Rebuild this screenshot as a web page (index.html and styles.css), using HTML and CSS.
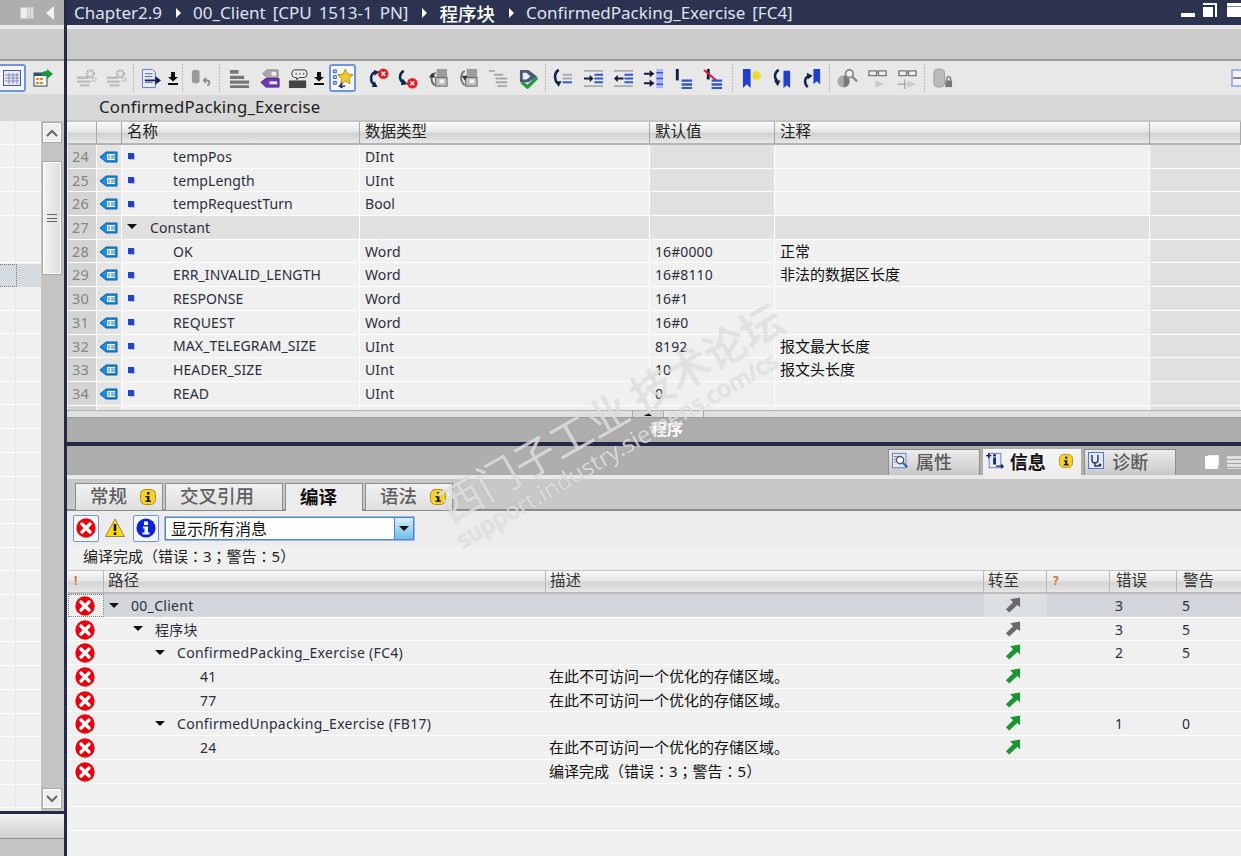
FILE: index.html
```html
<!DOCTYPE html>
<html lang="zh-CN">
<head>
    <meta charset="UTF-8">
    <title>ConfirmedPacking_Exercise [FC4]</title>
    <link rel="stylesheet" href="styles.css">
</head>
<body>
<svg class="sprite" xmlns="http://www.w3.org/2000/svg">
    <symbol id="i-tag" viewBox="0 0 18 12"><path d="M0 6 6 1H17V11H6Z" fill="#1a8ede" stroke="#0b5aa5"/><rect x="7" y="3" width="8" height="6" fill="#fff"/><path d="M9 4v4M12 4v4M14 4v4" stroke="#1a6cc0"/></symbol>
    <symbol id="i-err" viewBox="0 0 20 20"><circle cx="10" cy="10" r="9.7" fill="#e8000f"/><path d="M6 6l8 8M14 6l-8 8" stroke="#fff" stroke-width="3.4" stroke-linecap="round"/></symbol>
    <symbol id="i-warn" viewBox="0 0 20 20"><path d="M10 1 19.500 18.500H.5Z" fill="#ffdc00" stroke="#8a8a60"/><path d="M10 6v7" stroke="#111" stroke-width="2.600"/><rect x="8.700" y="14.400" width="2.600" height="2.600" fill="#111"/></symbol>
    <symbol id="i-info" viewBox="0 0 20 20"><circle cx="10" cy="10" r="9.600" fill="#0a24d6"/><rect x="8" y="3.500" width="4" height="3.500" fill="#fff"/><path d="M7 8.500h5v6h1.500v2h-7v-2H8.500v-4H7Z" fill="#fff"/></symbol>
    <symbol id="i-badge" viewBox="0 0 16 16"><rect x=".5" y=".5" width="15" height="15" rx="5" fill="#f8d22c" stroke="#b08c10"/><rect x="7" y="3" width="2.500" height="2.500" fill="#222"/><path d="M5.500 7H9.500v4.500H11V13H5.500v-1.500H7V8.500H5.500Z" fill="#222"/></symbol>
    <symbol id="i-go" viewBox="0 0 16 17"><path d="M.5 13 8 5.500 5 2.500 15.500.5V11L12.500 8.500 4 16.500Z" fill="currentColor"/></symbol>
    <symbol id="i-gears" viewBox="0 0 22 22"><path d="M1 9h12v2.500H1ZM1 13h14v2.500H1ZM4 17h10v2.500H4Z" fill="#bcbcbc"/><circle cx="15" cy="6" r="3.500" fill="none" stroke="#aaa" stroke-width="2.400" stroke-dasharray="1.500 1"/><circle cx="19" cy="12" r="2" fill="none" stroke="#b0b0b0" stroke-width="1.600" stroke-dasharray="1 1"/></symbol>
    <symbol id="i-doc" viewBox="0 0 22 22"><path d="M1.500 1.500H12l3 3V20.500H1.500Z" fill="#e6ecfa" stroke="#5a78c8"/><path d="M4 6h8M4 9h8M4 15h8" stroke="#5060a0"/><path d="M4 12h11V8.500l6 4.500-6 4.500V14H4Z" fill="#141f55"/></symbol>
    <symbol id="i-down" viewBox="0 0 12 14"><path d="M4 1H8V6H11L6 10.500 1 6H4ZM1 12h10v2H1Z" fill="#111"/></symbol>
    <symbol id="i-dbundo" viewBox="0 0 22 22"><path d="M2 4c0-3 8-3 8 0V14c0 3-8 3-8 0Z" fill="#9a9a9a"/><path d="M14 13h4c3 0 3 5 0 5M14 13l3-2.500M14 13l3 2.500" fill="none" stroke="#8a8a8a" stroke-width="1.800"/></symbol>
    <symbol id="i-lines" viewBox="0 0 22 22"><path d="M1 2h9v4H1ZM1 8h15v3.500H1ZM1 13h20v3.500H1ZM1 18h20v3H1Z" fill="#777"/></symbol>
    <symbol id="i-tags" viewBox="0 0 22 22"><path d="M4 6 8 2H20V10H8Z" fill="#a8a8a8" stroke="#888"/><rect x="13" y="4" width="5" height="4" fill="#eee"/><path d="M2 15 7 11H21V20H7Z" fill="#7038b8" stroke="#50208a"/><rect x="11" y="14" width="8" height="3" fill="#eee"/></symbol>
    <symbol id="i-chat" viewBox="0 0 22 22"><rect x="1" y="13" width="18" height="8" fill="#444"/><path d="M9 12v-2H7a3 4 0 0 1 0-8H17a3 4 0 0 1 0 8h-5Z" fill="#eee" stroke="#333"/><path d="M8 6h1M12 6h1M16 6h1" stroke="#333" stroke-width="2"/></symbol>
    <symbol id="i-star" viewBox="0 0 22 22"><path d="M1.500 2h3v3h-3ZM1.500 8h3v3h-3ZM1.500 14h3v3h-3Z" fill="#c8d8f8" stroke="#3058b8"/><path d="M14 1l2.500 5.500 5.500.5-4 4 1 5.500-5-3-5 3 1-5.500-4-4 5.500-.5Z" fill="#f4c830" stroke="#b89010"/><path d="M14 19H8l3-3M8 19l3 2" fill="none" stroke="#141f55" stroke-width="1.400"/></symbol>
    <symbol id="i-curlerr" viewBox="0 0 22 22"><path d="M8 4C2 6 2 14 6 17" fill="none" stroke="#11264f" stroke-width="2.600"/><path d="M4 20h6l-3-6ZM6 2l6 2-5 4Z" fill="#11264f"/><circle cx="16" cy="6" r="5.500" fill="#ea1c28"/><path d="M14 4l4 4M18 4l-4 4" stroke="#fff" stroke-width="1.500"/></symbol>
    <symbol id="i-curlerr2" viewBox="0 0 22 22"><path d="M6 3C1 6 1 12 5 15" fill="none" stroke="#11264f" stroke-width="2.600"/><path d="M3 18 10 17 5 11Z" fill="#11264f"/><circle cx="15" cy="16" r="5.500" fill="#ea1c28"/><path d="M13 14l4 4M17 14l-4 4" stroke="#fff" stroke-width="1.500"/></symbol>
    <symbol id="i-sync1" viewBox="0 0 22 22"><rect x="9" y="1" width="11" height="9" fill="#9c9c9c"/><rect x="8" y="10" width="12" height="9" fill="#bdbdbd" stroke="#666"/><rect x="12" y="12" width="5" height="4" fill="#eee"/><path d="M8 5C3 7 2 14 7 18" fill="none" stroke="#666" stroke-width="2"/><path d="M1 10h7l-3.500-5Z" fill="#333"/></symbol>
    <symbol id="i-sync2" viewBox="0 0 22 22"><rect x="9" y="1" width="11" height="9" fill="#9c9c9c"/><rect x="8" y="10" width="12" height="9" fill="#bdbdbd" stroke="#666"/><rect x="12" y="12" width="5" height="4" fill="#eee"/><path d="M7 3C2 6 2 14 7 18" fill="none" stroke="#777" stroke-width="2"/><path d="M4 8h6l-3 5Z" fill="#333"/></symbol>
    <symbol id="i-graylines" viewBox="0 0 22 22"><path d="M1 2h6v2H1ZM6 6h10v2H6ZM8 10h12v2H8ZM8 14h12v2H8ZM10 18h10v2H10Z" fill="#a8a8a8"/></symbol>
    <symbol id="i-plug" viewBox="0 0 22 22"><path d="M2 2h9l9 7-9 6H2Z" fill="#495a78"/><path d="M5 5h4l4 4-4 3H5Z" fill="#e8edf5"/><path d="M4 15 10 20 20 10" fill="none" stroke="#1d9a36" stroke-width="3.400"/></symbol>
    <symbol id="i-jmp-l" viewBox="0 0 22 22"><path d="M6 2C1 5 1 12 5 16" fill="none" stroke="#11264f" stroke-width="2.600"/><path d="M2 14h7l-3 6Z" fill="#11264f"/><path d="M10 6h10v2H10ZM10 10h10v2H10Z" fill="#aaa"/><path d="M10 14h10v2H10Z" fill="#2f55d8"/></symbol>
    <symbol id="i-indent" viewBox="0 0 22 22"><path d="M1 2h20v2H1ZM1 18h20v2H1Z" fill="#aaa"/><path d="M12 6h9v2h-9ZM12 10h9v2h-9ZM12 14h9v2h-9Z" fill="#2f55d8"/><path d="M1 10h6V7l4 4-4 4v-3H1Z" fill="#111c40"/></symbol>
    <symbol id="i-outdent" viewBox="0 0 22 22"><path d="M1 2h20v2H1ZM1 18h20v2H1Z" fill="#aaa"/><path d="M12 6h9v2h-9ZM12 10h9v2h-9ZM12 14h9v2h-9Z" fill="#2f55d8"/><path d="M11 10H5V7l-4 4 4 4v-3h6Z" fill="#111c40"/></symbol>
    <symbol id="i-cols" viewBox="0 0 22 22"><path d="M14 1h7v20h-7Z" fill="#a8b8ee"/><path d="M1 5h6V2l5 4-5 4V7H1ZM1 15h6v-3l5 4-5 4v-3H1Z" fill="#111c40"/><path d="M14 5h7M14 11h7M14 17h7" stroke="#2f55d8" stroke-width="1.500"/></symbol>
    <symbol id="i-mark" viewBox="0 0 22 22"><rect x="3" y="1" width="3" height="12" fill="#111c40"/><path d="M9 12h11v2.500H9ZM9 16h11v2.500H9ZM9 20h11v2H9Z" fill="#2f55d8"/></symbol>
    <symbol id="i-unmark" viewBox="0 0 22 22"><rect x="4" y="1" width="3" height="11" fill="#111c40"/><path d="M1 2 14 13" stroke="#e01a20" stroke-width="2"/><path d="M9 12h11v2.500H9ZM9 16h11v2.500H9ZM9 20h11v2H9Z" fill="#2f55d8"/></symbol>
    <symbol id="i-bookstar" viewBox="0 0 22 22"><path d="M1 1h8v20l-4-4-4 4Z" fill="#1f3fd0"/><path d="M15 3v10M10 8h10M11.500 4.500l7 7M18.500 4.500l-7 7" stroke="#e8d820" stroke-width="2"/></symbol>
    <symbol id="i-bookl" viewBox="0 0 22 22"><path d="M12 3h7v18l-3.500-3-3.500 3Z" fill="#1f3fd0"/><path d="M7 2C2 5 2 11 6 14" fill="none" stroke="#11264f" stroke-width="2.600"/><path d="M2 13h7l-3 6Z" fill="#11264f"/></symbol>
    <symbol id="i-bookr" viewBox="0 0 22 22"><path d="M12 1h7v16l-3.500-3-3.500 3Z" fill="#1f3fd0"/><path d="M8 8C2 10 2 16 6 20" fill="none" stroke="#11264f" stroke-width="2.600"/><path d="M5 5l6 3-5 4Z" fill="#11264f"/></symbol>
    <symbol id="i-search" viewBox="0 0 22 22"><circle cx="7" cy="14" r="6.500" fill="#aaa"/><path d="M7 8v12a6 6 0 0 0 0-12Z" fill="#7a7a7a"/><circle cx="13" cy="6" r="4" fill="#eee" stroke="#888" stroke-width="1.800"/><path d="M16 9l5 5" stroke="#888" stroke-width="2.400"/></symbol>
    <symbol id="i-glass1" viewBox="0 0 22 22"><path d="M2 3h8v5H2ZM12 3h8v5h-8ZM10 4h2" fill="#eee" stroke="#777" stroke-width="1.400"/><path d="M9 13l9 4-9 4Z" fill="#ccc"/></symbol>
    <symbol id="i-glass2" viewBox="0 0 22 22"><path d="M2 3h8v5H2ZM12 3h8v5h-8ZM10 4h2" fill="#eee" stroke="#777" stroke-width="1.400"/><path d="M11 13l9 4-9 4Z" fill="#ccc"/><path d="M1 17h9M8 12v10" stroke="#aaa" stroke-width="1.400"/></symbol>
    <symbol id="i-dblock" viewBox="0 0 22 22"><path d="M2 4c0-4 11-4 11 0V17c0 4-11 4-11 0Z" fill="#bcbcbc" stroke="#999"/><rect x="14" y="13" width="7" height="7" fill="#777"/><path d="M15.500 13v-2a2 2 0 0 1 4 0v2" fill="none" stroke="#777" stroke-width="1.400"/></symbol>
    <symbol id="i-table" viewBox="0 0 18 16"><rect x=".5" y=".5" width="17" height="15" fill="#e8edf8" stroke="#4a5a90"/><path d="M2 5h14M2 8h14M2 11h14M6 3v11M10 3v11M14 3v11" stroke="#7a8ac0"/></symbol>
    <symbol id="i-export" viewBox="0 0 20 18"><rect x="1" y="4" width="13" height="13" fill="#fff" stroke="#345"/><rect x="1" y="4" width="13" height="3" fill="#334a80"/><path d="M3 9h3v2H3ZM7 9h3v2H7ZM3 13h3v2H3ZM7 13h3v2H7Z" fill="#e88820"/><path d="M8 7c0-4 3-5 6-5V0l6 5-6 5V7c-2 0-4 0-6 0Z" fill="#159a40"/></symbol>
    <symbol id="i-props" viewBox="0 0 20 18"><rect x=".5" y=".5" width="15" height="16" fill="#dfe8f8" stroke="#5a78c8"/><circle cx="9" cy="8" r="4" fill="#fff" stroke="#555" stroke-width="1.500"/><path d="M12 11l5 5" stroke="#2d60b8" stroke-width="2.400"/><path d="M2 4h4M2 7h3M2 10h3" stroke="#777"/></symbol>
    <symbol id="i-infos" viewBox="0 0 20 18"><rect x="3.500" y=".5" width="13" height="16" fill="#e4ebfa" stroke="#5a78c8"/><path d="M0 3h6M3 0v6" stroke="#141f55" stroke-width="1.600"/><path d="M8 5h3v8H8ZM8 1.500h3V4H8Z" fill="#141f55"/><path d="M11 14h6v-2.500l3 3.500-3 3v-2.500h-6Z" fill="#141f55"/></symbol>
    <symbol id="i-diag" viewBox="0 0 18 18"><rect x=".5" y=".5" width="15" height="16" fill="#dfe8f8" stroke="#5a78c8"/><path d="M4 3v5a3 3 0 0 0 6 0V3M7 11v3h4" fill="none" stroke="#334" stroke-width="1.400"/><circle cx="12" cy="13" r="1.500" fill="#334"/></symbol>
</svg>

<div class="app">
    <!-- project tree side -->
    <aside class="side">
        <div class="side-title">
            <svg class="pane-ico" viewBox="0 0 14 14"><path d="M0 1h14v12H0Z" fill="#c8c8c8"/><path d="M1 2h6v10H1Z" fill="#eee"/><path d="M9 2v10M12 2v10" stroke="#eee"/></svg>
            <svg class="back-ico" viewBox="0 0 8 14"><path d="M8 0V14L0 7Z" fill="#f4f4f4"/></svg>
        </div>
        <div class="light-strip"></div>
        <div class="gray-strip"></div>
        <div class="side-tools">
            <span class="side-selected"><svg class="i18"><use href="#i-table"/></svg></span>
            <svg class="i20 side-export"><use href="#i-export"/></svg>
        </div>
        <div class="side-band"></div>
        <div class="side-body">
            <div class="nav-list"><div class="nav-sel"><span class="nav-focus"></span></div></div>
            <div class="scrollbar">
                <div class="sb-btn">
                    <svg viewBox="0 0 12 8"><path d="M1 7l5-5 5 5" fill="none" stroke="#666" stroke-width="2"/></svg>
                </div>
                <div class="sb-thumb"><span class="grip"></span></div>
                <div class="sb-btn sb-end">
                    <svg viewBox="0 0 12 8"><path d="M1 1l5 5 5-5" fill="none" stroke="#666" stroke-width="2"/></svg>
                </div>
            </div>
        </div>
        <div class="side-foot"></div>
    </aside>

    <main class="main">
        <div class="titlebar">
            <div class="crumbs">
                <span>Chapter2.9</span><i class="crumb-arrow"></i>
                <span>00_Client [CPU 1513-1 PN]</span><i class="crumb-arrow"></i>
                <span class="cjk-b">程序块</span><i class="crumb-arrow"></i>
                <span>ConfirmedPacking_Exercise [FC4]</span>
            </div>
            <div class="win-btns">
                <span class="win-min"></span>
                <span class="win-restore"></span>
                <span class="win-max"></span>
            </div>
        </div>
        <div class="light-strip"></div>
        <div class="gray-strip"></div>

        <div class="toolbar">
            <span class="tool"><svg class="ti"><use href="#i-gears"/></svg></span>
            <span class="tool"><svg class="ti"><use href="#i-gears"/></svg></span>
            <span class="sep"></span>
            <span class="tool"><svg class="ti"><use href="#i-doc"/></svg></span>
            <span class="tool mini"><svg class="ti-s"><use href="#i-down"/></svg></span>
            <span class="sep"></span>
            <span class="tool"><svg class="ti"><use href="#i-dbundo"/></svg></span>
            <span class="sep wide"></span>
            <span class="tool"><svg class="ti"><use href="#i-lines"/></svg></span>
            <span class="tool"><svg class="ti"><use href="#i-tags"/></svg></span>
            <span class="tool chat"><svg class="ti"><use href="#i-chat"/></svg></span>
            <span class="tool mini"><svg class="ti-s"><use href="#i-down"/></svg></span>
            <span class="tool active"><svg class="ti"><use href="#i-star"/></svg></span>
            <span class="tool"><svg class="ti"><use href="#i-curlerr"/></svg></span>
            <span class="tool"><svg class="ti"><use href="#i-curlerr2"/></svg></span>
            <span class="tool"><svg class="ti"><use href="#i-sync1"/></svg></span>
            <span class="tool"><svg class="ti"><use href="#i-sync2"/></svg></span>
            <span class="tool"><svg class="ti"><use href="#i-graylines"/></svg></span>
            <span class="tool"><svg class="ti"><use href="#i-plug"/></svg></span>
            <span class="sep"></span>
            <span class="tool"><svg class="ti"><use href="#i-jmp-l"/></svg></span>
            <span class="tool"><svg class="ti"><use href="#i-indent"/></svg></span>
            <span class="tool"><svg class="ti"><use href="#i-outdent"/></svg></span>
            <span class="tool"><svg class="ti"><use href="#i-cols"/></svg></span>
            <span class="tool"><svg class="ti"><use href="#i-mark"/></svg></span>
            <span class="tool"><svg class="ti"><use href="#i-unmark"/></svg></span>
            <span class="sep wide"></span>
            <span class="tool"><svg class="ti"><use href="#i-bookstar"/></svg></span>
            <span class="tool"><svg class="ti"><use href="#i-bookl"/></svg></span>
            <span class="tool"><svg class="ti"><use href="#i-bookr"/></svg></span>
            <span class="sep"></span>
            <span class="tool"><svg class="ti"><use href="#i-search"/></svg></span>
            <span class="tool"><svg class="ti"><use href="#i-glass1"/></svg></span>
            <span class="tool"><svg class="ti"><use href="#i-glass2"/></svg></span>
            <span class="sep"></span>
            <span class="tool"><svg class="ti"><use href="#i-dblock"/></svg></span>
            <span class="split-view"></span>
        </div>

        <div class="block-name">ConfirmedPacking_Exercise</div>

        <!-- interface table -->
        <div class="iface">
            <div class="ihead">
                <div></div><div></div><div>名称</div><div>数据类型</div><div>默认值</div><div>注释</div><div></div>
            </div>
            <div class="irows">
                <div class="irow"><div class="num">24</div><div class="ico"><svg class="tag"><use href="#i-tag"/></svg></div><div class="nm"><i class="bullet"></i><span>tempPos</span></div><div>DInt</div><div class="off"></div><div></div><div class="off"></div></div>
                <div class="irow"><div class="num">25</div><div class="ico"><svg class="tag"><use href="#i-tag"/></svg></div><div class="nm"><i class="bullet"></i><span>tempLength</span></div><div>UInt</div><div class="off"></div><div></div><div class="off"></div></div>
                <div class="irow"><div class="num">26</div><div class="ico"><svg class="tag"><use href="#i-tag"/></svg></div><div class="nm"><i class="bullet"></i><span>tempRequestTurn</span></div><div>Bool</div><div class="off"></div><div></div><div class="off"></div></div>
                <div class="irow group"><div class="num">27</div><div class="ico"><svg class="tag"><use href="#i-tag"/></svg></div><div class="nm"><i class="tri"></i><span>Constant</span></div><div></div><div></div><div></div><div class="off"></div></div>
                <div class="irow"><div class="num">28</div><div class="ico"><svg class="tag"><use href="#i-tag"/></svg></div><div class="nm"><i class="bullet"></i><span>OK</span></div><div>Word</div><div>16#0000</div><div class="cn">正常</div><div class="off"></div></div>
                <div class="irow"><div class="num">29</div><div class="ico"><svg class="tag"><use href="#i-tag"/></svg></div><div class="nm"><i class="bullet"></i><span>ERR_INVALID_LENGTH</span></div><div>Word</div><div>16#8110</div><div class="cn">非法的数据区长度</div><div class="off"></div></div>
                <div class="irow"><div class="num">30</div><div class="ico"><svg class="tag"><use href="#i-tag"/></svg></div><div class="nm"><i class="bullet"></i><span>RESPONSE</span></div><div>Word</div><div>16#1</div><div></div><div class="off"></div></div>
                <div class="irow"><div class="num">31</div><div class="ico"><svg class="tag"><use href="#i-tag"/></svg></div><div class="nm"><i class="bullet"></i><span>REQUEST</span></div><div>Word</div><div>16#0</div><div></div><div class="off"></div></div>
                <div class="irow"><div class="num">32</div><div class="ico"><svg class="tag"><use href="#i-tag"/></svg></div><div class="nm"><i class="bullet"></i><span>MAX_TELEGRAM_SIZE</span></div><div>UInt</div><div>8192</div><div class="cn">报文最大长度</div><div class="off"></div></div>
                <div class="irow"><div class="num">33</div><div class="ico"><svg class="tag"><use href="#i-tag"/></svg></div><div class="nm"><i class="bullet"></i><span>HEADER_SIZE</span></div><div>UInt</div><div>10</div><div class="cn">报文头长度</div><div class="off"></div></div>
                <div class="irow"><div class="num">34</div><div class="ico"><svg class="tag"><use href="#i-tag"/></svg></div><div class="nm"><i class="bullet"></i><span>READ</span></div><div>UInt</div><div>0</div><div></div><div class="off"></div></div>
                <div class="irow"><div class="num"></div><div class="ico"></div><div></div><div></div><div></div><div></div><div class="off"></div></div>
            </div>
        </div>

        <div class="splitter"><span class="split-up"></span><span class="split-down"></span></div>
        <div class="editor-label">程序</div>
        <div class="pane-line"></div>

        <!-- inspector window -->
        <div class="insp-tabs">
            <div class="itab"><svg class="i18"><use href="#i-props"/></svg>属性</div>
            <div class="itab current"><svg class="i18"><use href="#i-infos"/></svg>信息<svg class="i14 itab-badge"><use href="#i-badge"/></svg></div>
            <div class="itab"><svg class="i18"><use href="#i-diag"/></svg>诊断</div>
            <div class="insp-btns"><span class="insp-float"></span><span class="insp-list"></span></div>
        </div>
        <div class="light-strip"></div>
        <div class="subtabs">
            <div class="stab t1">常规<svg class="i16"><use href="#i-badge"/></svg></div>
            <div class="stab t2">交叉引用</div>
            <div class="stab t3 current">编译</div>
            <div class="stab t4">语法<svg class="i16"><use href="#i-badge"/></svg></div>
        </div>
        <div class="filter">
            <span class="flt-btn"><svg class="i20"><use href="#i-err"/></svg></span>
            <svg class="i20 flt-warn"><use href="#i-warn"/></svg>
            <span class="flt-btn"><svg class="i20"><use href="#i-info"/></svg></span>
            <div class="combo">
                <span>显示所有消息</span>
                <span class="combo-btn"><i></i></span>
            </div>
        </div>
        <div class="summary tc" lang="zh-TW">编译完成（错误：3；警告：5）</div>

        <div class="results">
            <div class="rhead"><div class="bang">!</div><div>路径</div><div>描述</div><div>转至</div><div class="bang">?</div><div>错误</div><div>警告</div></div>
            <div class="rrow selected"><div class="rico focus"><svg class="i20"><use href="#i-err"/></svg></div><div class="path l0"><i class="tri"></i><span>00_Client</span></div><div></div><div class="go gray"><svg class="i16"><use href="#i-go"/></svg></div><div></div><div>3</div><div>5</div></div>
            <div class="rrow"><div class="rico"><svg class="i20"><use href="#i-err"/></svg></div><div class="path l1"><i class="tri"></i><span>程序块</span></div><div></div><div class="go gray"><svg class="i16"><use href="#i-go"/></svg></div><div></div><div>3</div><div>5</div></div>
            <div class="rrow"><div class="rico"><svg class="i20"><use href="#i-err"/></svg></div><div class="path l2"><i class="tri"></i><span>ConfirmedPacking_Exercise (FC4)</span></div><div></div><div class="go"><svg class="i16"><use href="#i-go"/></svg></div><div></div><div>2</div><div>5</div></div>
            <div class="rrow"><div class="rico"><svg class="i20"><use href="#i-err"/></svg></div><div class="path l3"><span>41</span></div><div class="cn">在此不可访问一个优化的存储区域。</div><div class="go"><svg class="i16"><use href="#i-go"/></svg></div><div></div><div></div><div></div></div>
            <div class="rrow"><div class="rico"><svg class="i20"><use href="#i-err"/></svg></div><div class="path l3"><span>77</span></div><div class="cn">在此不可访问一个优化的存储区域。</div><div class="go"><svg class="i16"><use href="#i-go"/></svg></div><div></div><div></div><div></div></div>
            <div class="rrow"><div class="rico"><svg class="i20"><use href="#i-err"/></svg></div><div class="path l2"><i class="tri"></i><span>ConfirmedUnpacking_Exercise (FB17)</span></div><div></div><div class="go"><svg class="i16"><use href="#i-go"/></svg></div><div></div><div>1</div><div>0</div></div>
            <div class="rrow"><div class="rico"><svg class="i20"><use href="#i-err"/></svg></div><div class="path l3"><span>24</span></div><div class="cn">在此不可访问一个优化的存储区域。</div><div class="go"><svg class="i16"><use href="#i-go"/></svg></div><div></div><div></div><div></div></div>
            <div class="rrow"><div class="rico"><svg class="i20"><use href="#i-err"/></svg></div><div class="path"></div><div class="cn tc" lang="zh-TW">编译完成（错误：3；警告：5）</div><div></div><div></div><div></div><div></div></div>
            <div class="rrow"></div>
            <div class="rrow"></div>
        </div>
    </main>
</div>

<!-- forum watermark lies over the whole shot -->
<div class="wm wm-cn">西门子工业&nbsp;技术论坛</div>
<div class="wm wm-en">support.industry.siemens.com/cs</div>
</body>
</html>
```

FILE: styles.css
```css
* {
    box-sizing: border-box;
}

html, body {
    margin: 0;
    height: 856px;
    overflow: hidden;
}

body {
    position: relative;
    font-family: "Noto Sans", "Noto Sans CJK SC", sans-serif;
    font-size: 14px;
    letter-spacing: .1px;
    color: #2b2f3d;
    background: #f0f0f0;
}

.sprite {
    position: absolute;
    width: 0;
    height: 0;
}

.i14 { width: 14px; height: 14px; }
.i16 { width: 16px; height: 16px; }
.i18 { width: 18px; height: 18px; }
.i20 { width: 20px; height: 20px; }

.tc {
    font-family: "Noto Sans", "Noto Sans CJK TC", sans-serif;
}

.app {
    display: flex;
    height: 856px;
}

.light-strip {
    height: 4px;
    background: #e9e9e9;
    flex: none;
}

.gray-strip {
    height: 32px;
    background: #cbcbcb;
    border-bottom: 2px solid #9c9c9c;
    flex: none;
}

/* left side */
.side {
    width: 67px;
    flex: none;
    display: flex;
    flex-direction: column;
    border-right: 3px solid #232a45;
}

.side-title {
    height: 25px;
    background: #aeaeae;
    display: flex;
    align-items: center;
    padding-left: 20px;
    gap: 12px;
}

.pane-ico { width: 14px; height: 14px; }
.back-ico { width: 8px; height: 14px; }

.side-tools {
    height: 33px;
    background: #e8e8e8;
    display: flex;
    align-items: center;
    gap: 7px;
}

.side-selected {
    width: 26px;
    height: 28px;
    display: flex;
    align-items: center;
    justify-content: flex-end;
    padding-right: 3px;
    border: 2px solid #6e96e0;
    border-left: none;
    background: #f6f6fb;
    border-radius: 0 3px 3px 0;
}

.side-band {
    height: 27px;
    background: #d7d7d7;
}

.side-body {
    flex: 1;
    display: flex;
    background: #f0f0f0;
    min-height: 0;
}

.nav-list {
    width: 41px;
    background:
        linear-gradient(#e9e9e9, #e9e9e9) 15px 0 / 1px 100% no-repeat,
        repeating-linear-gradient(#f0f0f0 0, #f0f0f0 22.7px, #fff 22.7px, #fff 23.7px);
    padding-top: 143px;
}

.nav-sel {
    height: 23px;
    background: #d6dbe0;
}

.nav-focus {
    display: block;
    width: 17px;
    height: 23px;
    border: 1px dotted #777;
    border-left: none;
}

.scrollbar {
    width: 23px;
    padding: 1px 2px 2px 1px;
    background: #c4c4c4;
    display: flex;
    flex-direction: column;
}

.sb-btn {
    height: 21px;
    background: #eeeeee;
    border: 1px solid #a8a8a8;
    box-shadow: inset 0 0 0 1px #fff;
    display: flex;
    align-items: center;
    justify-content: center;
    flex: none;
}

.sb-btn svg {
    width: 12px;
    height: 8px;
}

.sb-end {
    margin-top: auto;
}

.sb-thumb {
    margin-top: 18px;
    height: 114px;
    background: linear-gradient(90deg, #f2f2f2, #dfdfdf);
    border: 1px solid #a8a8a8;
    box-shadow: inset 0 0 0 1px #fff;
    display: flex;
    align-items: center;
    justify-content: center;
}

.grip {
    width: 10px;
    height: 8px;
    border-top: 1px solid #666;
    border-bottom: 1px solid #666;
    background: linear-gradient(#666, #666) center / 100% 1px no-repeat;
}

.side-foot {
    height: 45px;
    flex: none;
    border-top: 3px solid #232a45;
    background: linear-gradient(#f0f0f0 0, #d0d0d0 24px, #8f8f8f 24px, #8f8f8f 25px, #c4c4c4 25px);
}

/* main */
.main {
    flex: 1;
    min-width: 0;
    display: flex;
    flex-direction: column;
}

.titlebar {
    height: 25px;
    flex: none;
    background: #2b3350;
    color: #dfe3ee;
    font-size: 17px;
    letter-spacing: 0;
    word-spacing: 2.5px;
    display: flex;
    align-items: center;
    justify-content: space-between;
    padding-left: 7px;
}

.crumbs {
    display: flex;
    align-items: center;
    white-space: nowrap;
}

.cjk-b {
    font-size: 18.5px;
    font-weight: 500;
    color: #fff;
}

.crumb-arrow {
    width: 0;
    height: 0;
    margin: 0 12px 0 14px;
    border-left: 5px solid #fff;
    border-top: 5px solid transparent;
    border-bottom: 5px solid transparent;
}

.win-btns {
    display: flex;
    align-items: flex-start;
    height: 25px;
    width: 60px;
    gap: 8px;
    padding-top: 3px;
}

.win-min {
    width: 14px;
    height: 4px;
    margin-top: 10px;
    background: #fff;
}

.win-restore {
    position: relative;
    width: 14px;
    height: 14px;
    border: 2px solid #fff;
    border-left: none;
    border-bottom: none;
}

.win-restore::after {
    content: "";
    position: absolute;
    left: 0;
    top: 2px;
    width: 10px;
    height: 10px;
    background: #fff;
    box-shadow: 0 0 0 1px #2b3350;
}

.win-max {
    width: 14px;
    height: 14px;
    margin-left: 2px;
    border-top: 3px solid #fff;
    background: #fff;
    box-shadow: inset 0 1px 0 #888;
}

.toolbar {
    height: 34px;
    flex: none;
    background: #e8e8e8;
    display: flex;
    align-items: center;
    padding-left: 4px;
    position: relative;
}

.tool {
    width: 30px;
    height: 28px;
    flex: none;
    display: flex;
    align-items: center;
    justify-content: center;
}

.tool.mini { width: 14px; }
.tool.chat { width: 28px; }

.tool.active {
    width: 27px;
    margin: 0 7px 0 3px;
    border: 2px solid #6e96e0;
    border-radius: 3px;
    background: #f6f6fb;
}

.ti { width: 21px; height: 21px; }
.ti-s { width: 12px; height: 14px; }

.sep {
    width: 5px;
    height: 28px;
    flex: none;
    margin: 0;
    background: linear-gradient(#8a8a8a 50%, transparent 50%) center / 1px 3px repeat-y;
}

.sep.wide { width: 9px; }

.split-view {
    width: 14px;
    height: 18px;
    margin-left: auto;
    margin-right: -4px;
    flex: none;
    border: 2px solid #aab0e8;
    background: linear-gradient(#f4f4f8 45%, #888 45%, #888 55%, #f4f4f8 55%);
}

.block-name {
    height: 27px;
    flex: none;
    background: #d8d8d8;
    font-size: 16.8px;
    letter-spacing: .2px;
    line-height: 24px;
    padding-left: 32px;
    color: #222;
    border-bottom: 2px solid #c4c4c4;
}

/* interface table */
.iface {
    height: 288px;
    flex: none;
    background: #f0f0f0;
    padding-left: 1px;
}

.irows {
    height: 265px;
    overflow: hidden;
}

.ihead, .irow {
    display: grid;
    grid-template-columns: 29px 25px 238px 290px 125px 375px 91px;
}

.ihead {
    height: 23px;
    font-size: 15.5px;
    letter-spacing: 0;
    color: #222;
}

.ihead > div {
    padding: 1px 0 0 5px;
    line-height: 16px;
    background: linear-gradient(#fafafa, #e6e6e6 45%, #d2d2d2 55%, #e8e8e8);
    border-right: 1px solid #a8a8a8;
    border-bottom: 2px solid #b4b4b4;
}

.irow {
    height: 23.7px;
    border-bottom: 1px solid #fff;
}

.irow > div {
    padding-left: 5px;
    line-height: 23px;
    border-right: 1px solid #fff;
    white-space: nowrap;
    overflow: hidden;
}

.irow > .num {
    background: #d4d4d4;
    color: #858585;
    padding-left: 4px;
    font-size: 14.5px;
}

.irow > .ico {
    background: #e4e4e4;
    padding: 6px 0 0 3px;
}

.tag {
    display: block;
    width: 18px;
    height: 12px;
}

.irow > .off {
    background: #e0e0e0;
}

.irow.group > div {
    background: #e0e0e0;
}

.irow.group > .num {
    background: #d4d4d4;
}

.irow > .cn, .rrow > .cn {
    font-size: 15px;
    letter-spacing: 0;
    color: #111;
}

.irow > .nm {
    display: flex;
    align-items: center;
}

.bullet {
    width: 6px;
    height: 6px;
    margin: 0 0 0 1px;
    background: #2244c8;
    box-shadow: 1px 1px 0 #b8c0d8;
    flex: none;
}

.nm .bullet + span {
    margin-left: 39px;
}

.tri {
    flex: none;
    width: 0;
    height: 0;
    margin-bottom: 1px;
    border-top: 5px solid #111;
    border-left: 5px solid transparent;
    border-right: 5px solid transparent;
}

.nm .tri + span {
    margin-left: 13px;
}

.splitter {
    height: 8px;
    flex: none;
    background: #e0e0e0;
    border-top: 1px solid #b0b0b0;
    border-bottom: 1px solid #9c9c9c;
    display: flex;
    padding-left: 565px;
}

.split-up, .split-down {
    height: 6px;
    width: 32px;
    border: 1px solid #aaa;
    border-width: 0 1px;
    background: #d8d8d8;
    display: flex;
    justify-content: center;
    align-items: center;
}

.split-up::after {
    content: "";
    border-bottom: 3px solid #111;
    border-left: 4px solid transparent;
    border-right: 4px solid transparent;
}

.split-down {
    width: 40px;
    border-left: none;
    background: #e8e8e8;
}

.editor-label {
    height: 24px;
    flex: none;
    background: #adadad;
    color: #fff;
    font-weight: 700;
    font-size: 16px;
    letter-spacing: 0;
    line-height: 23px;
    text-align: center;
    padding-left: 26px;
}

.pane-line {
    height: 4px;
    flex: none;
    background: #232a45;
}

.insp-tabs {
    height: 29px;
    flex: none;
    background: #aeaeae;
    display: flex;
    align-items: flex-end;
    padding-left: 821px;
    gap: 3px;
    font-size: 18px;
    letter-spacing: 0;
    position: relative;
}

.itab {
    width: 92px;
    height: 26px;
    padding: 0 0 3px 3px;
    display: flex;
    align-items: center;
    gap: 6px;
    font-weight: 500;
    color: #5a5a5a;
    background: linear-gradient(#ececec, #c8c8c8);
    border: 1px solid #8c8c8c;
    border-bottom: none;
}

.itab svg {
    flex: none;
}

.itab.current {
    width: 99px;
    height: 30px;
    margin-bottom: -4px;
    padding-bottom: 7px;
    color: #111;
    font-weight: 700;
    background: linear-gradient(#f4f4f4, #ececec);
    border: none;
    z-index: 1;
}

.itab-badge {
    margin-left: 7px;
}

.insp-btns {
    display: flex;
    align-items: center;
    height: 26px;
    gap: 9px;
    margin-left: 26px;
}

.insp-float {
    width: 13px;
    height: 13px;
    background: #fff;
    box-shadow: 2px -2px 0 -1px #eee;
}

.insp-list {
    width: 14px;
    height: 13px;
    background: repeating-linear-gradient(#e0e0e0 0, #e0e0e0 3px, #a4a4a4 3px, #a4a4a4 4px);
}

.subtabs {
    height: 32px;
    flex: none;
    background: #c8c8c8;
    border-bottom: 2px solid #8c8c8c;
    display: flex;
    align-items: flex-end;
    padding-left: 8px;
    gap: 2px;
    font-size: 18.5px;
    letter-spacing: 0;
}

.stab {
    height: 27px;
    margin-bottom: -1px;
    padding: 0 0 4px 14px;
    display: flex;
    align-items: center;
    gap: 13px;
    color: #5f5f5f;
    font-weight: 500;
    background: linear-gradient(#f2f2f2, #dedede);
    border: 1px solid #8c8c8c;
    border-bottom: none;
    white-space: nowrap;
}

.stab svg {
    flex: none;
    margin-top: 3px;
}

.stab.t1 { width: 88px; }
.stab.t2 { width: 118px; }
.stab.t3 { width: 78px; height: 28px; margin-bottom: -2px; background: #ececec; color: #111; font-weight: 700; z-index: 1; }
.stab.t4 { width: 88px; }

.filter {
    height: 34px;
    flex: none;
    background: #ececec;
    display: flex;
    align-items: center;
    padding-left: 6px;
}

.flt-btn {
    width: 26px;
    height: 27px;
    flex: none;
    display: flex;
    align-items: center;
    justify-content: center;
    background: #f6f6fb;
    border: 1px solid #6e96e0;
    border-radius: 2px;
}

.flt-warn {
    margin: 0 8px 0 6px;
    flex: none;
}

.combo {
    width: 249px;
    height: 23px;
    margin-left: 6px;
    display: flex;
    justify-content: space-between;
    align-items: center;
    padding: 0 0 0 5px;
    font-size: 16px;
    letter-spacing: 0;
    color: #111;
    background: #fff;
    border: 1px solid #4f84d2;
    box-shadow: 0 0 0 .5px #4f84d2;
}

.combo-btn {
    width: 19px;
    height: 21px;
    display: flex;
    align-items: center;
    justify-content: center;
    background: linear-gradient(#d5eefb, #6fbde6);
    border-left: 1px solid #4f84d2;
}

.combo-btn i {
    width: 0;
    height: 0;
    border-top: 5px solid #111;
    border-left: 5px solid transparent;
    border-right: 5px solid transparent;
}

.summary {
    height: 25px;
    flex: none;
    background: #f0f0f0;
    padding-left: 16px;
    line-height: 23px;
    font-size: 15px;
    letter-spacing: 0;
    color: #222;
}

/* compile results */
.results {
    flex: 1;
    min-height: 0;
    padding-left: 1px;
    overflow: hidden;
}

.rhead, .rrow {
    display: grid;
    grid-template-columns: 36px 442px 438px 63px 63px 67px 65px;
}

.rhead {
    height: 24px;
    font-size: 15.5px;
    letter-spacing: 0;
    color: #333;
    border-top: 1px solid #c4c4c4;
}

.rhead > div {
    padding: 1px 0 0 4px;
    line-height: 17px;
    background: linear-gradient(#f8f8f8, #e6e6e6 45%, #d4d4d4 55%, #e6e6e6);
    border-right: 1px solid #b8b8b8;
    border-bottom: 2px solid #bcbcbc;
}

.rhead > div:nth-child(n+6) {
    padding-left: 6px;
}

.rhead > .bang {
    color: #c07a30;
    font-weight: 700;
    font-size: 12px;
    padding-left: 6px;
}

.rrow {
    height: 23.7px;
    border-bottom: 1px solid #fff;
    line-height: 23px;
}

.rrow > div {
    padding-left: 3px;
    white-space: nowrap;
}

.rrow > div:nth-child(n+6) {
    padding-left: 5px;
}

.rrow.selected > div {
    background: #d2d6da;
}

.rrow.selected > .go {
    background: #dde0e3;
}

.rrow > .rico {
    padding: 2px 0 0 7px;
}

.rrow > .rico svg {
    display: block;
}

.rrow.selected > .focus {
    background: #eeeeee;
    outline: 1px dotted #777;
    outline-offset: -1px;
}

.path {
    display: flex;
    align-items: center;
    letter-spacing: .3px;
}

.path span {
    margin-left: 12px;
}

.rrow > .path.l0 { padding-left: 5px; }
.rrow > .path.l1 { padding-left: 29px; }
.rrow > .path.l2 { padding-left: 51px; }
.rrow > .path.l3 { padding-left: 84px; }

.rrow > .go {
    color: #1b9436;
    padding: 3px 0 0 21px;
}

.rrow > .go.gray {
    color: #6a6a6a;
}

.rrow > .go svg {
    display: block;
}

/* watermark */
.wm {
    position: absolute;
    white-space: nowrap;
    color: rgba(255, 255, 255, .62);
    text-shadow: 0 0 1px rgba(140, 140, 140, .6);
    transform: rotate(-30deg);
    transform-origin: 0 100%;
    pointer-events: none;
}

.wm-cn {
    left: 453px;
    top: 483px;
    font-family: "Noto Sans CJK SC", sans-serif;
    font-size: 42px;
    line-height: 44px;
}

.wm-en {
    left: 466px;
    top: 523px;
    font-size: 23.5px;
    line-height: 32px;
    letter-spacing: 0;
}
```
